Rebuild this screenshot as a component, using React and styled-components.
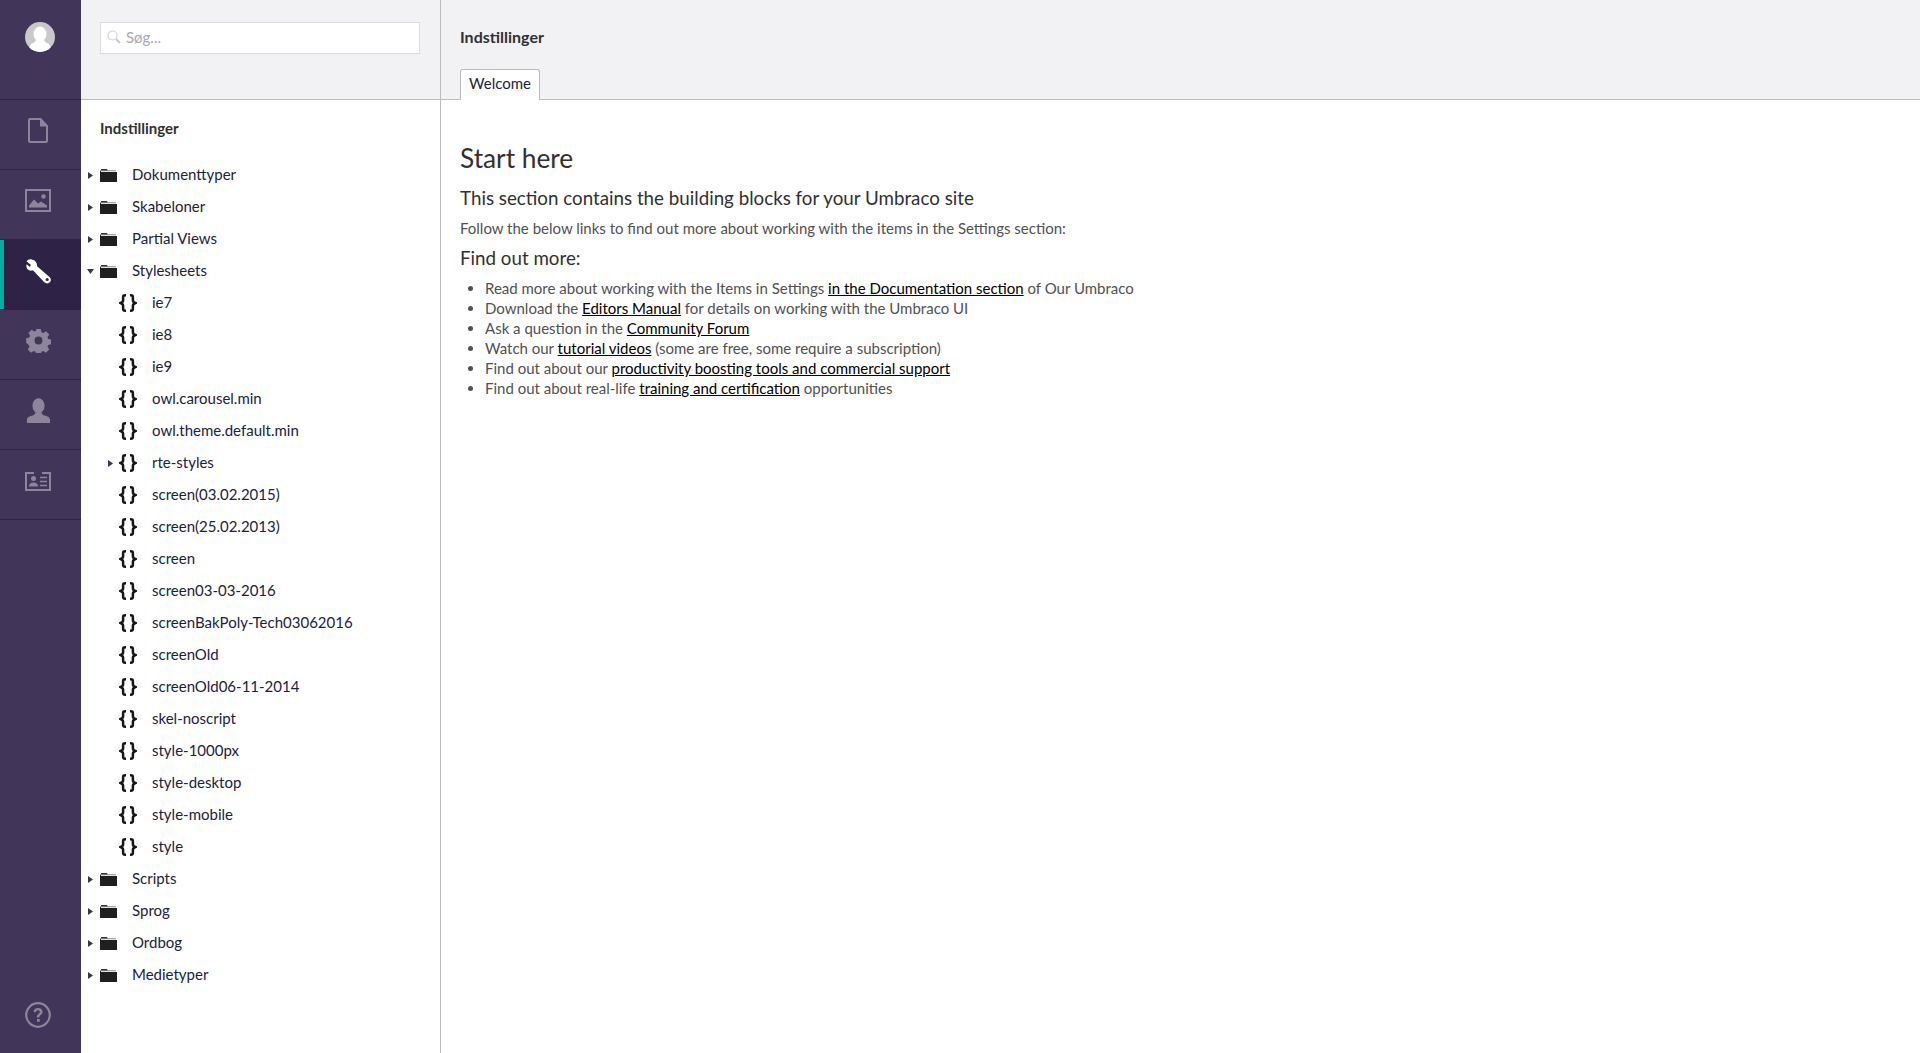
import React from "react";
import styled, { createGlobalStyle } from "styled-components";

const Global = createGlobalStyle`
  html, body { margin: 0; padding: 0; height: 100%; background: #fff; }
  #root { height: 1053px; }
  * { box-sizing: border-box; }
  body { font-family: Lato, "Open Sans", sans-serif; color: #303033; overflow: hidden; }
`;

const Page = styled.div`
  display: flex;
  height: 1053px;
  width: 1920px;
`;

const Rail = styled.nav`
  width: 81px;
  flex: none;
  background: #413659;
  display: flex;
  flex-direction: column;
`;
const RailTop = styled.div`
  height: 100px;
  flex: none;
  border-bottom: 1px solid #2e2246;
  padding: 22px 1px 0 0;
  display: flex;
  justify-content: center;
  align-items: flex-start;
`;
const RailItem = styled.div`
  height: 70px;
  flex: none;
  border-bottom: 1px solid #2e2246;
  background: ${(p) => (p.$active ? "#2e2246" : "transparent")};
  box-shadow: ${(p) => (p.$active ? "inset 4px 0 0 #00aea2" : "none")};
  color: ${(p) => (p.$active ? "#fff" : "#8d869b")};
  display: flex;
  align-items: center;
  justify-content: center;
  padding: 0 5px ${(p) => (p.$active ? 6 : 8)}px 0;
`;
const RailSpacer = styled.div`
  flex: 1;
`;
const RailHelp = styled.div`
  height: 51px;
  flex: none;
  color: #8d869b;
  display: flex;
  justify-content: center;
  align-items: flex-start;
  padding-right: 5px;
`;

const TreePanel = styled.aside`
  width: 360px;
  flex: none;
  border-right: 1px solid #bbbabf;
  display: flex;
  flex-direction: column;
`;
const TreeHead = styled.div`
  height: 100px;
  flex: none;
  background: #f2f2f5;
  border-bottom: 1px solid #bbbabf;
  padding: 22px 20px 0 19px;
`;
const SearchBox = styled.div`
  height: 32px;
  background: #fff;
  border: 1px solid #dcdcdf;
  display: flex;
  align-items: center;
  padding: 0 0 3px 6px;
  gap: 5px;
  font-size: 15px;
  color: #a9a9ad;
`;
const TreeTitle = styled.div`
  padding: 18px 0 0 19px;
  height: 58px;
  flex: none;
  font-size: 15px;
  font-weight: 700;
  line-height: 20px;
  color: #303033;
`;
const TreeList = styled.ul`
  list-style: none;
  margin: 0;
  padding: 0;
`;
const Row = styled.li`
  height: 32px;
  display: flex;
  align-items: center;
  padding-left: ${(p) => (p.$child ? 20 : 0)}px;
  font-size: 15px;
  color: #1b2240;
`;
const Caret = styled.span`
  width: 19px;
  flex: none;
  display: flex;
  justify-content: center;
  color: #343a4a;
  margin-top: 2px;
`;
const NodeIcon = styled.span`
  width: 32px;
  flex: none;
  display: flex;
  margin-top: 2px;
`;
const BraceSvg = styled.svg`
  margin-left: -1px;
`;

const Main = styled.main`
  flex: 1;
  display: flex;
  flex-direction: column;
`;
const MainHead = styled.header`
  height: 100px;
  flex: none;
  background: #f2f2f5;
  border-bottom: 1px solid #bbbabf;
  padding: 0 19px;
  display: flex;
  flex-direction: column;
`;
const MainTitle = styled.div`
  padding-top: 27px;
  height: 69px;
  flex: none;
  font-size: 16px;
  font-weight: 700;
  line-height: 20px;
  color: #303033;
`;
const Tab = styled.div`
  width: 80px;
  height: 31px;
  flex: none;
  background: #fff;
  border: 1px solid #bbbabf;
  border-bottom: 0;
  border-radius: 3px 3px 0 0;
  font-size: 15px;
  color: #1b2240;
  display: flex;
  align-items: center;
  justify-content: center;
  padding-bottom: 4px;
  position: relative;
  z-index: 1;
`;
const Content = styled.section`
  padding: 43px 19px 0;
  color: #303033;
`;
const H1 = styled.h1`
  margin: 0;
  font-size: 26.25px;
  font-weight: 400;
  line-height: 30px;
  height: 43px;
`;
const H3 = styled.h3`
  margin: 0;
  font-size: 18.75px;
  font-weight: 400;
  line-height: 24px;
  height: 32px;
`;
const Para = styled.p`
  margin: 0;
  font-size: 15px;
  line-height: 20px;
  height: 28px;
  color: #515054;
`;
const H4 = styled.h4`
  margin: 0;
  font-size: 18.75px;
  font-weight: 400;
  line-height: 24px;
  height: 32px;
`;
const Bullets = styled.ul`
  margin: 0;
  padding: 0 0 0 25px;
  font-size: 15px;
  line-height: 20px;
  color: #515054;
`;
const Link = styled.a`
  color: #000;
  text-decoration: underline;
`;

const Avatar = () => (
  <svg width="30" height="30" viewBox="0 0 30 30">
    <defs>
      <clipPath id="av"><circle cx="15" cy="15" r="15" /></clipPath>
    </defs>
    <circle cx="15" cy="15" r="15" fill="#c9c9c9" />
    <g clipPath="url(#av)" fill="#fff">
      <ellipse cx="15" cy="12" rx="6.5" ry="7.5" />
      <path d="M11 17c0 2-1 3-3 4-2 1-4 2-4 9h22c0-7-2-8-4-9-2-1-3-2-3-4z" />
    </g>
  </svg>
);
const DocIcon = () => (
  <svg width="20" height="25" viewBox="0 0 20 25">
    <path d="M2 1h10.500L19 8v14.500a1.500 1.500 0 0 1-1.500 1.500h-15A1.500 1.500 0 0 1 1 22.500V2a1 1 0 0 1 1-1z" fill="none" stroke="currentColor" strokeWidth="2" />
    <path d="M12 0l8 8.500h-8z" fill="currentColor" />
  </svg>
);
const PictureIcon = () => (
  <svg width="26" height="23" viewBox="0 0 26 23">
    <rect x="1" y="1" width="24" height="21" fill="none" stroke="currentColor" strokeWidth="2" />
    <circle cx="18.500" cy="7.500" r="2.200" fill="currentColor" />
    <path d="M4 18.500v-2l5-6 4 4 3-2 6 4v2z" fill="currentColor" />
  </svg>
);
const WrenchIcon = () => (
  <svg width="25" height="25" viewBox="0 0 26 26">
    <path d="M6 .5C3.500 0 1.700 1 .6 2.500L5 6 4 8.200 .7 5.500C-.2 8 .8 10.800 3.200 11.800c1.400.6 2.800.5 4-.1l11.800 12.600c1.500 1.500 4.800 1.500 6-.3 1.400-2 .9-4.200-.6-5.400L11.500 7.600c.4-3-1.500-6.300-5.500-7.100z" fill="currentColor" />
    <circle cx="22" cy="21.400" r="1.600" fill="#2e2246" />
  </svg>
);
const GearIcon = () => (
  <svg width="25" height="25" viewBox="0 0 26 26">
    <path fillRule="evenodd" fill="currentColor" d="M10.400 0h5.200l.7 3.600 2.200.9 3-2 3.700 3.700-2 3 .9 2.200 3.600.7v5.200l-3.600.7-.9 2.200 2 3-3.700 3.700-3-2-2.200.9-.7 3.600h-5.200l-.7-3.600-2.200-.9-3 2-3.700-3.700 2-3-.9-2.200L-1 15.600v-5.200l3.600-.7.9-2.200-2-3 3.700-3.700 3 2 2.200-.9zM13 8.500a4.500 4.500 0 1 0 0 9 4.500 4.500 0 0 0 0-9z" transform="translate(1.100 1.100) scale(.915)" />
  </svg>
);
const UserIcon = () => (
  <svg width="25" height="25" viewBox="0 0 26 26">
    <ellipse cx="13" cy="8" rx="6.300" ry="7.800" fill="currentColor" />
    <path d="M9.500 15c0 1.500-.5 2.300-2 3C4 19.300 1 19.500 1 23v3h24v-3c0-3.500-3-3.700-6.500-5-1.500-.7-2-1.500-2-3z" fill="currentColor" />
  </svg>
);
const CardIcon = () => (
  <svg width="26" height="21" viewBox="0 0 26 21">
    <path d="M1 3h8M17 3h8M1 2v18h24V2" fill="none" stroke="currentColor" strokeWidth="2" />
    <circle cx="8.500" cy="8.500" r="2.500" fill="currentColor" />
    <path d="M4 16.500c0-3 2-4 4.500-4s4.500 1 4.500 4z" fill="currentColor" />
    <path d="M15 7.500h7M15 11.500h7M15 15.500h7" stroke="currentColor" strokeWidth="1.600" />
  </svg>
);
const HelpIcon = () => (
  <svg width="26" height="26" viewBox="0 0 26 26">
    <circle cx="13" cy="13" r="11.800" fill="none" stroke="currentColor" strokeWidth="2.200" />
    <path d="M8.500 10c.2-2.700 2.100-4.100 4.600-4.100 2.700 0 4.500 1.600 4.500 3.800 0 3.100-3.300 3-3.300 5.900h-2.600c0-3.700 3.100-3.900 3.100-5.700 0-1-.7-1.600-1.800-1.600-1.200 0-1.900.7-2 1.900z" fill="currentColor" />
    <rect x="12" y="17" width="2.700" height="2.800" fill="currentColor" />
  </svg>
);
const SearchIcon = () => (
  <svg width="14" height="14" viewBox="0 0 14 14">
    <circle cx="5.500" cy="5.500" r="4.500" fill="none" stroke="#d4d4d7" strokeWidth="1.200" />
    <path d="M9 9l4 4" stroke="#c4c4c8" strokeWidth="1.800" />
  </svg>
);
const FolderIcon = () => (
  <svg width="17" height="14" viewBox="0 0 17 14">
    <path d="M1 1h6l1 1.200h8v1H1z" fill="#8a8a8a" />
    <path d="M0 2.500h.9V4H17v10H0z" fill="#1f1f1f" />
    <path d="M1 1.200h6v1H1z" fill="#1f1f1f" />
  </svg>
);
const BraceIcon = () => (
  <BraceSvg width="18" height="18" viewBox="0 0 18 18">
    <path d="M7 1.300H6c-1.300 0-1.900.6-1.900 1.900v3c0 1.400-.8 2.200-2.600 2.800 1.800.6 2.600 1.400 2.600 2.800v3c0 1.300.6 1.900 1.900 1.900h1M11 1.300h1c1.300 0 1.900.6 1.900 1.900v3c0 1.400.8 2.200 2.600 2.800-1.800.6-2.600 1.400-2.600 2.800v3c0 1.300-.6 1.900-1.900 1.900h-1" fill="none" stroke="#16161e" strokeWidth="2.500" />
  </BraceSvg>
);
const CaretIcon = ({ open }) => (
  <svg width="7" height="7" viewBox="0 0 7 7">
    {open ? <path d="M0 1h7L3.500 6z" fill="currentColor" /> : <path d="M1 0l5 3.500L1 7z" fill="currentColor" />}
  </svg>
);

const stylesheets = [
  "ie7", "ie8", "ie9", "owl.carousel.min", "owl.theme.default.min", "rte-styles",
  "screen(03.02.2015)", "screen(25.02.2013)", "screen", "screen03-03-2016",
  "screenBakPoly-Tech03062016", "screenOld", "screenOld06-11-2014", "skel-noscript",
  "style-1000px", "style-desktop", "style-mobile", "style",
];

const Folder = ({ name, open }) => (
  <Row>
    <Caret><CaretIcon open={open} /></Caret>
    <NodeIcon><FolderIcon /></NodeIcon>
    {name}
  </Row>
);

export default function App() {
  return (
    <Page>
      <Global />
      <Rail>
        <RailTop><Avatar /></RailTop>
        <RailItem><DocIcon /></RailItem>
        <RailItem><PictureIcon /></RailItem>
        <RailItem $active><WrenchIcon /></RailItem>
        <RailItem><GearIcon /></RailItem>
        <RailItem><UserIcon /></RailItem>
        <RailItem><CardIcon /></RailItem>
        <RailSpacer />
        <RailHelp><HelpIcon /></RailHelp>
      </Rail>
      <TreePanel>
        <TreeHead>
          <SearchBox><SearchIcon />Søg...</SearchBox>
        </TreeHead>
        <TreeTitle>Indstillinger</TreeTitle>
        <TreeList>
          <Folder name="Dokumenttyper" />
          <Folder name="Skabeloner" />
          <Folder name="Partial Views" />
          <Folder name="Stylesheets" open />
          {stylesheets.map((s) => (
            <Row key={s} $child>
              <Caret>{s === "rte-styles" && <CaretIcon />}</Caret>
              <NodeIcon><BraceIcon /></NodeIcon>
              {s}
            </Row>
          ))}
          <Folder name="Scripts" />
          <Folder name="Sprog" />
          <Folder name="Ordbog" />
          <Folder name="Medietyper" />
        </TreeList>
      </TreePanel>
      <Main>
        <MainHead>
          <MainTitle>Indstillinger</MainTitle>
          <Tab>Welcome</Tab>
        </MainHead>
        <Content>
          <H1>Start here</H1>
          <H3>This section contains the building blocks for your Umbraco site</H3>
          <Para>Follow the below links to find out more about working with the items in the Settings section:</Para>
          <H4>Find out more:</H4>
          <Bullets>
            <li>Read more about working with the Items in Settings <Link>in the Documentation section</Link> of Our Umbraco</li>
            <li>Download the <Link>Editors Manual</Link> for details on working with the Umbraco UI</li>
            <li>Ask a question in the <Link>Community Forum</Link></li>
            <li>Watch our <Link>tutorial videos</Link> (some are free, some require a subscription)</li>
            <li>Find out about our <Link>productivity boosting tools and commercial support</Link></li>
            <li>Find out about real-life <Link>training and certification</Link> opportunities</li>
          </Bullets>
        </Content>
      </Main>
    </Page>
  );
}
